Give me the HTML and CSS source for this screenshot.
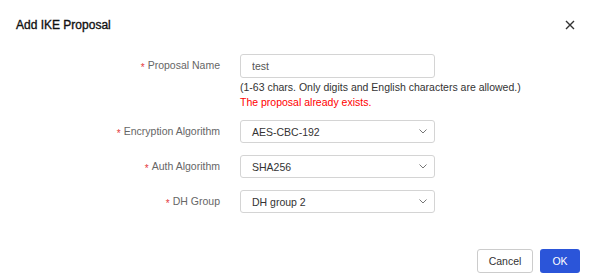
FILE: index.html
```html
<!DOCTYPE html>
<html lang="en">
<head>
    <meta charset="UTF-8">
    <meta name="viewport" content="width=device-width, initial-scale=1.0">
    <title>Add IKE Proposal</title>
    <link rel="stylesheet" href="styles.css">
</head>
<body>
    <div class="dialog">
        <div class="dialog-header">
            <span class="dialog-title">Add IKE Proposal</span>
            <span class="close-btn">
                <svg width="10" height="10" viewBox="0 0 10 10">
                    <path d="M1 1 L9 9 M9 1 L1 9" stroke="#333" stroke-width="1.4" fill="none"/>
                </svg>
            </span>
        </div>

        <div class="form">
            <div class="form-row">
                <label class="form-label"><span class="req">*</span>Proposal Name</label>
                <div class="form-control">
                    <input type="text" class="text-input" value="test">
                    <div class="hint">(1-63 chars. Only digits and English characters are allowed.)</div>
                    <div class="error-message">The proposal already exists.</div>
                </div>
            </div>

            <div class="form-row">
                <label class="form-label"><span class="req">*</span>Encryption Algorithm</label>
                <div class="form-control">
                    <div class="select">
                        <span>AES-CBC-192</span>
                        <svg width="8" height="5" viewBox="0 0 8 5"><path d="M0.5 0.5 L4 4 L7.5 0.5" stroke="#777" stroke-width="1" fill="none"/></svg>
                    </div>
                </div>
            </div>

            <div class="form-row">
                <label class="form-label"><span class="req">*</span>Auth Algorithm</label>
                <div class="form-control">
                    <div class="select">
                        <span>SHA256</span>
                        <svg width="8" height="5" viewBox="0 0 8 5"><path d="M0.5 0.5 L4 4 L7.5 0.5" stroke="#777" stroke-width="1" fill="none"/></svg>
                    </div>
                </div>
            </div>

            <div class="form-row">
                <label class="form-label"><span class="req">*</span>DH Group</label>
                <div class="form-control">
                    <div class="select">
                        <span>DH group 2</span>
                        <svg width="8" height="5" viewBox="0 0 8 5"><path d="M0.5 0.5 L4 4 L7.5 0.5" stroke="#777" stroke-width="1" fill="none"/></svg>
                    </div>
                </div>
            </div>
        </div>

        <div class="dialog-footer">
            <button class="btn btn-cancel">Cancel</button>
            <button class="btn btn-ok">OK</button>
        </div>
    </div>
</body>
</html>
```

FILE: styles.css
```css
body {
    margin: 0;
    font-family: "Liberation Sans", Arial, sans-serif;
    font-size: 10.5px;
    background-color: #fff;
    color: #333;
}
.dialog {
    width: 591px;
    height: 279px;
    background-color: #fff;
}
.dialog-header {
    height: 50px;
    padding: 0 16px 0 16px;
    display: flex;
    align-items: center;
    justify-content: space-between;
}
.dialog-title {
    font-size: 12px;
    color: #111;
    -webkit-text-stroke: 0.35px #111;
}
.close-btn {
    display: flex;
}
.form {
    padding-top: 4px;
    display: flex;
    flex-direction: column;
    gap: 10px;
}
.form-row {
    display: grid;
    grid-template-columns: 220px 195px;
    column-gap: 20px;
    align-items: start;
}
.form-label {
    text-align: right;
    color: #666;
    line-height: 23px;
}
.req {
    color: #e4393c;
    margin-right: 3px;
    font-size: 10px;
    vertical-align: -2px;
}
.text-input {
    width: 100%;
    height: 24px;
    box-sizing: border-box;
    border: 1px solid #d4d4d4;
    border-radius: 3px;
    padding: 0 11px;
    font-family: inherit;
    font-size: 10.5px;
    color: #555;
    outline: none;
    display: block;
}
.hint {
    white-space: nowrap;
    line-height: 15px;
    margin-top: 2px;
    color: #333;
}
.error-message {
    white-space: nowrap;
    line-height: 15px;
    color: #f00;
}
.select {
    height: 23px;
    box-sizing: border-box;
    border: 1px solid #d4d4d4;
    border-radius: 3px;
    padding: 0 7px 0 11px;
    display: flex;
    align-items: center;
    justify-content: space-between;
    color: #333;
}
.dialog-footer {
    display: flex;
    justify-content: flex-end;
    gap: 7px;
    padding: 34px 11px 0 0;
}
.btn {
    height: 24px;
    border-radius: 3px;
    font-family: inherit;
    font-size: 10.5px;
    cursor: pointer;
    padding: 0;
}
.btn-cancel {
    width: 56px;
    background-color: #fff;
    border: 1px solid #ccc;
    color: #333;
}
.btn-ok {
    width: 40px;
    background-color: #2b55d9;
    border: none;
    color: #fff;
}
```
